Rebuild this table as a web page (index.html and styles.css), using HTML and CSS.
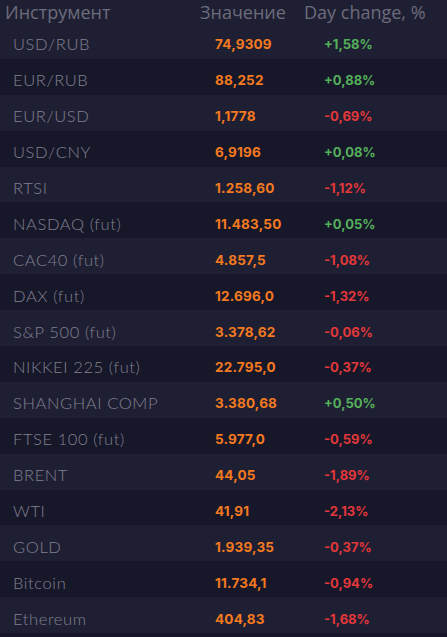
FILE: index.html
```html
<!DOCTYPE html>
<html lang="ru">
<head>
<meta charset="utf-8">
<link rel="stylesheet" href="styles.css">
</head>
<body>
<div class="table">
  <div class="head">
    <div class="c1">Инструмент</div>
    <div class="c2">Значение</div>
    <div class="c3">Day change, %</div>
  </div>
  <div class="row odd"><div class="name">USD/RUB</div><div class="val">74,9309</div><div class="chg up">+1,58%</div></div>
  <div class="row"><div class="name">EUR/RUB</div><div class="val">88,252</div><div class="chg up">+0,88%</div></div>
  <div class="row odd"><div class="name">EUR/USD</div><div class="val">1,1778</div><div class="chg down">-0,69%</div></div>
  <div class="row"><div class="name">USD/CNY</div><div class="val">6,9196</div><div class="chg up">+0,08%</div></div>
  <div class="row odd"><div class="name">RTSI</div><div class="val">1.258,60</div><div class="chg down">-1,12%</div></div>
  <div class="row"><div class="name">NASDAQ (fut)</div><div class="val">11.483,50</div><div class="chg up">+0,05%</div></div>
  <div class="row odd"><div class="name">CAC40 (fut)</div><div class="val">4.857,5</div><div class="chg down">-1,08%</div></div>
  <div class="row"><div class="name">DAX (fut)</div><div class="val">12.696,0</div><div class="chg down">-1,32%</div></div>
  <div class="row odd"><div class="name">S&amp;P 500 (fut)</div><div class="val">3.378,62</div><div class="chg down">-0,06%</div></div>
  <div class="row"><div class="name">NIKKEI 225 (fut)</div><div class="val">22.795,0</div><div class="chg down">-0,37%</div></div>
  <div class="row odd"><div class="name">SHANGHAI COMP</div><div class="val">3.380,68</div><div class="chg up">+0,50%</div></div>
  <div class="row"><div class="name">FTSE 100 (fut)</div><div class="val">5.977,0</div><div class="chg down">-0,59%</div></div>
  <div class="row odd"><div class="name">BRENT</div><div class="val">44,05</div><div class="chg down">-1,89%</div></div>
  <div class="row"><div class="name">WTI</div><div class="val">41,91</div><div class="chg down">-2,13%</div></div>
  <div class="row odd"><div class="name">GOLD</div><div class="val">1.939,35</div><div class="chg down">-0,37%</div></div>
  <div class="row"><div class="name">Bitcoin</div><div class="val">11.734,1</div><div class="chg down">-0,94%</div></div>
  <div class="row odd"><div class="name">Ethereum</div><div class="val">404,83</div><div class="chg down">-1,68%</div></div>
</div>
</body>
</html>
```

FILE: styles.css
```css
html, body {
  margin: 0;
  padding: 0;
  background: #16162a;
}
.table {
  width: 447px;
}
.head {
  display: grid;
  grid-template-columns: 195px 104px 1fr;
  height: 23px;
  background: #1f1f33;
  color: #6c6c7c;
  font-family: "Open Sans", sans-serif;
  font-size: 18px;
  line-height: 25px;
  padding-left: 5px;
}
.row {
  display: grid;
  grid-template-columns: 202px 109px 1fr;
  height: 35.9px;
  box-sizing: border-box;
  padding: 7px 0 0 13px;
  background: #17172a;
  align-items: center;
}
.row.odd {
  background: #1f1f33;
}
.name {
  font-family: "Lato", sans-serif;
  font-weight: 300;
  font-size: 16.5px;
  color: #80808f;
  letter-spacing: 0.6px;
  white-space: nowrap;
}
.val {
  font-family: "Inter", sans-serif;
  font-weight: 700;
  font-size: 13.5px;
  letter-spacing: 0.2px;
  color: #f47a1f;
}
.chg {
  font-family: "Inter", sans-serif;
  font-weight: 700;
  font-size: 13px;
}
.up { color: #55b05a; }
.down { color: #e2383a; }
```
